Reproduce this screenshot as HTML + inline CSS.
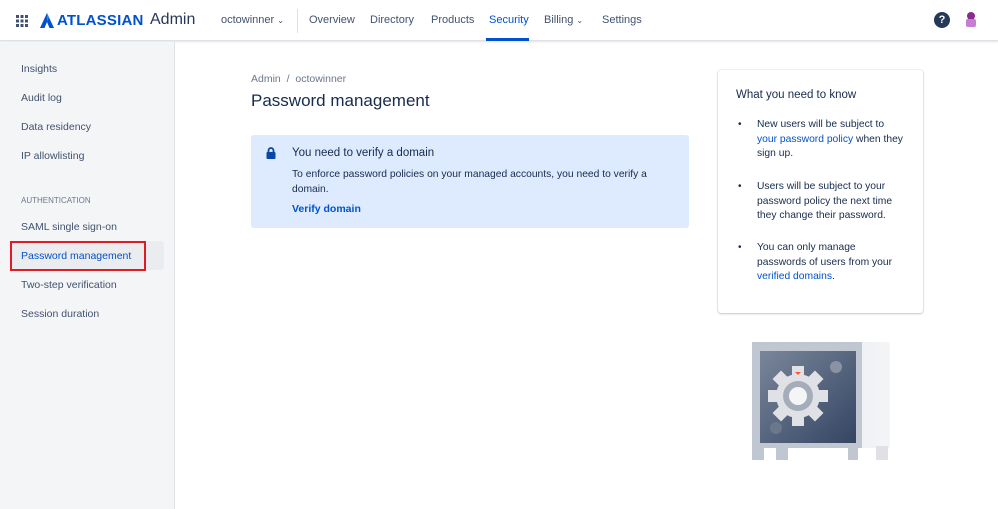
<!DOCTYPE html>
<html><head><style>
*{box-sizing:border-box;margin:0;padding:0}
body{width:998px;height:509px;overflow:hidden;font-family:"Liberation Sans",sans-serif;color:#172b4d;background:#fff;position:relative}
.hdr{position:absolute;left:0;top:0;width:998px;height:41px;background:#fff;border-bottom:1px solid #dfe1e6;box-shadow:0 1px 2px rgba(9,30,66,.12)}
.abs{position:absolute;white-space:nowrap}
.nav{font-size:11px;color:#42526e;top:14px}
.side{position:absolute;left:0;top:42px;width:175px;height:467px;background:#f4f5f7;border-right:1px solid #dfe1e6}
.si{position:absolute;left:21px;font-size:10.5px;color:#42526e}
a{color:#0052cc;text-decoration:none}
.kt{position:absolute;left:757px;font-size:10.3px;line-height:14.7px;color:#172b4d;white-space:normal;width:140px}
.bu{position:absolute;left:738px;font-size:10px;line-height:14.7px}
</style></head><body>
<div class="hdr">
  <svg class="abs" style="left:16px;top:15px" width="12" height="12" viewBox="0 0 12 12" fill="#42526e">
    <rect x="0" y="0" width="3" height="3"/><rect x="4.5" y="0" width="3" height="3"/><rect x="9" y="0" width="3" height="3"/>
    <rect x="0" y="4.5" width="3" height="3"/><rect x="4.5" y="4.5" width="3" height="3"/><rect x="9" y="4.5" width="3" height="3"/>
    <rect x="0" y="9" width="3" height="3"/><rect x="4.5" y="9" width="3" height="3"/><rect x="9" y="9" width="3" height="3"/></svg>
  <svg class="abs" style="left:40px;top:13px" width="14" height="15" viewBox="0 0 14 15"><path d="M7 0 L14 15 H9.5 L7 9 L4.5 15 H0 Z" fill="#0052cc"/><path d="M7 0 L9 4.5 L7 9Z" fill="#2684ff"/></svg>
  <div class="abs" style="left:57px;top:12px;font-size:15px;font-weight:bold;color:#0052cc;letter-spacing:.2px">ATLASSIAN</div>
  <div class="abs" style="left:150px;top:11px;font-size:16px;color:#253858">Admin</div>
  <div class="abs nav" style="left:221px">octowinner <span style="font-size:8px">&#8964;</span></div>
  <div class="abs" style="left:297px;top:9px;width:1px;height:24px;background:#dfe1e6"></div>
  <div class="abs nav" style="left:309px">Overview</div>
  <div class="abs nav" style="left:370px">Directory</div>
  <div class="abs nav" style="left:431px">Products</div>
  <div class="abs nav" style="left:489px;color:#0052cc">Security</div>
  <div class="abs" style="left:486px;top:38px;width:43px;height:3px;background:#0052cc"></div>
  <div class="abs nav" style="left:544px">Billing <span style="font-size:8px">&#8964;</span></div>
  <div class="abs nav" style="left:602px">Settings</div>
  <div class="abs" style="left:934px;top:12px;width:16px;height:16px;border-radius:50%;background:#253858;color:#fff;font-size:11px;font-weight:bold;text-align:center;line-height:16px">?</div>
  <div class="abs" style="left:967px;top:12px;width:8px;height:8px;border-radius:50%;background:#8b2a8f"></div>
  <div class="abs" style="left:966px;top:19px;width:10px;height:8px;background:#c77dd6;border-radius:2px"></div>
</div>
<div class="side">
  <div class="si" style="top:21px">Insights</div>
  <div class="si" style="top:50px">Audit log</div>
  <div class="si" style="top:79px">Data residency</div>
  <div class="si" style="top:108px">IP allowlisting</div>
  <div class="si" style="top:154px;font-size:8px;color:#6b778c">AUTHENTICATION</div>
  <div class="si" style="top:179px">SAML single sign-on</div>
  <div class="abs" style="left:10px;top:199px;width:154px;height:29px;background:#ebecf0;border-radius:3px"></div>
  <div class="abs" style="left:10px;top:199px;width:136px;height:30px;border:2px solid #e01b24"></div>
  <div class="si" style="top:208px;color:#0052cc">Password management</div>
  <div class="si" style="top:237px">Two-step verification</div>
  <div class="si" style="top:266px">Session duration</div>
</div>
<div class="abs" style="left:251px;top:73px;font-size:10.5px;color:#6b778c">Admin &nbsp;/&nbsp; octowinner</div>
<div class="abs" style="left:251px;top:91px;font-size:17px;color:#172b4d">Password management</div>
<div class="abs" style="left:251px;top:135px;width:438px;height:93px;background:#deebff;border-radius:3px"></div>
<svg class="abs" style="left:266px;top:147px" width="10" height="12" viewBox="0 0 10 12"><path d="M2.5 5V3.5a2.5 2.5 0 0 1 5 0V5" stroke="#0747a6" stroke-width="1.8" fill="none"/><rect x="0.5" y="5" width="9" height="7" rx="1" fill="#0747a6"/></svg>
<div class="abs" style="left:292px;top:147px;font-size:11.5px;color:#172b4d">You need to verify a domain</div>
<div class="abs" style="left:292px;top:167px;font-size:10.3px;line-height:15px;color:#172b4d;white-space:normal;width:362px">To enforce password policies on your managed accounts, you need to verify a domain.</div>
<div class="abs" style="left:292px;top:203px;font-size:10.5px;font-weight:bold;color:#0052cc">Verify domain</div>
<div class="abs" style="left:718px;top:70px;width:205px;height:243px;border-radius:3px;box-shadow:0 0 1px rgba(9,30,66,.35),0 1px 2px rgba(9,30,66,.2)"></div>
<div class="abs" style="left:736px;top:89px;font-size:11.5px;color:#172b4d">What you need to know</div>
<div class="bu" style="top:118px">&bull;</div>
<div class="kt" style="top:118px;width:148px">New users will be subject to <a>your password policy</a> when they sign up.</div>
<div class="bu" style="top:180px">&bull;</div>
<div class="kt" style="top:180px">Users will be subject to your password policy the next time they change their password.</div>
<div class="bu" style="top:241px">&bull;</div>
<div class="kt" style="top:241px;width:138px">You can only manage passwords of users from your <a>verified domains</a>.</div>
<svg class="abs" style="left:752px;top:342px" width="138" height="118" viewBox="0 0 138 118">
  <defs><linearGradient id="g1" x1="0" y1="0" x2="1" y2="1"><stop offset="0" stop-color="#7a869a"/><stop offset="1" stop-color="#344563"/></linearGradient>
  <linearGradient id="g2" x1="0" y1="0" x2="1" y2="0"><stop offset="0" stop-color="#dfe1e6"/><stop offset="1" stop-color="#f4f5f7"/></linearGradient></defs>
  <rect x="0" y="0" width="138" height="106" rx="2" fill="url(#g2)"/>
  <rect x="0" y="0" width="110" height="106" fill="#c1c7d0"/>
  <rect x="0" y="104" width="12" height="14" fill="#c1c7d0"/><rect x="24" y="104" width="12" height="14" fill="#c1c7d0"/>
  <rect x="96" y="104" width="10" height="14" fill="#c1c7d0"/><rect x="124" y="104" width="12" height="14" fill="#dfe1e6"/>
  <rect x="8" y="9" width="96" height="92" fill="url(#g1)"/>
  <g fill="#dfe1e6"><circle cx="46" cy="54" r="22"/>
  <rect x="40" y="24" width="12" height="60"/><rect x="16" y="48" width="60" height="12"/>
  <rect x="40" y="24" width="12" height="60" transform="rotate(45 46 54)"/><rect x="40" y="24" width="12" height="60" transform="rotate(-45 46 54)"/></g>
  <circle cx="46" cy="54" r="15" fill="#a5adba"/><circle cx="46" cy="54" r="9" fill="#f4f5f7"/>
  <path d="M43 30 h6 l-3 3z" fill="#ff5630"/>
  <circle cx="84" cy="25" r="6" fill="#8993a4"/><circle cx="24" cy="86" r="6" fill="#6b778c"/>
</svg>
</body></html>
